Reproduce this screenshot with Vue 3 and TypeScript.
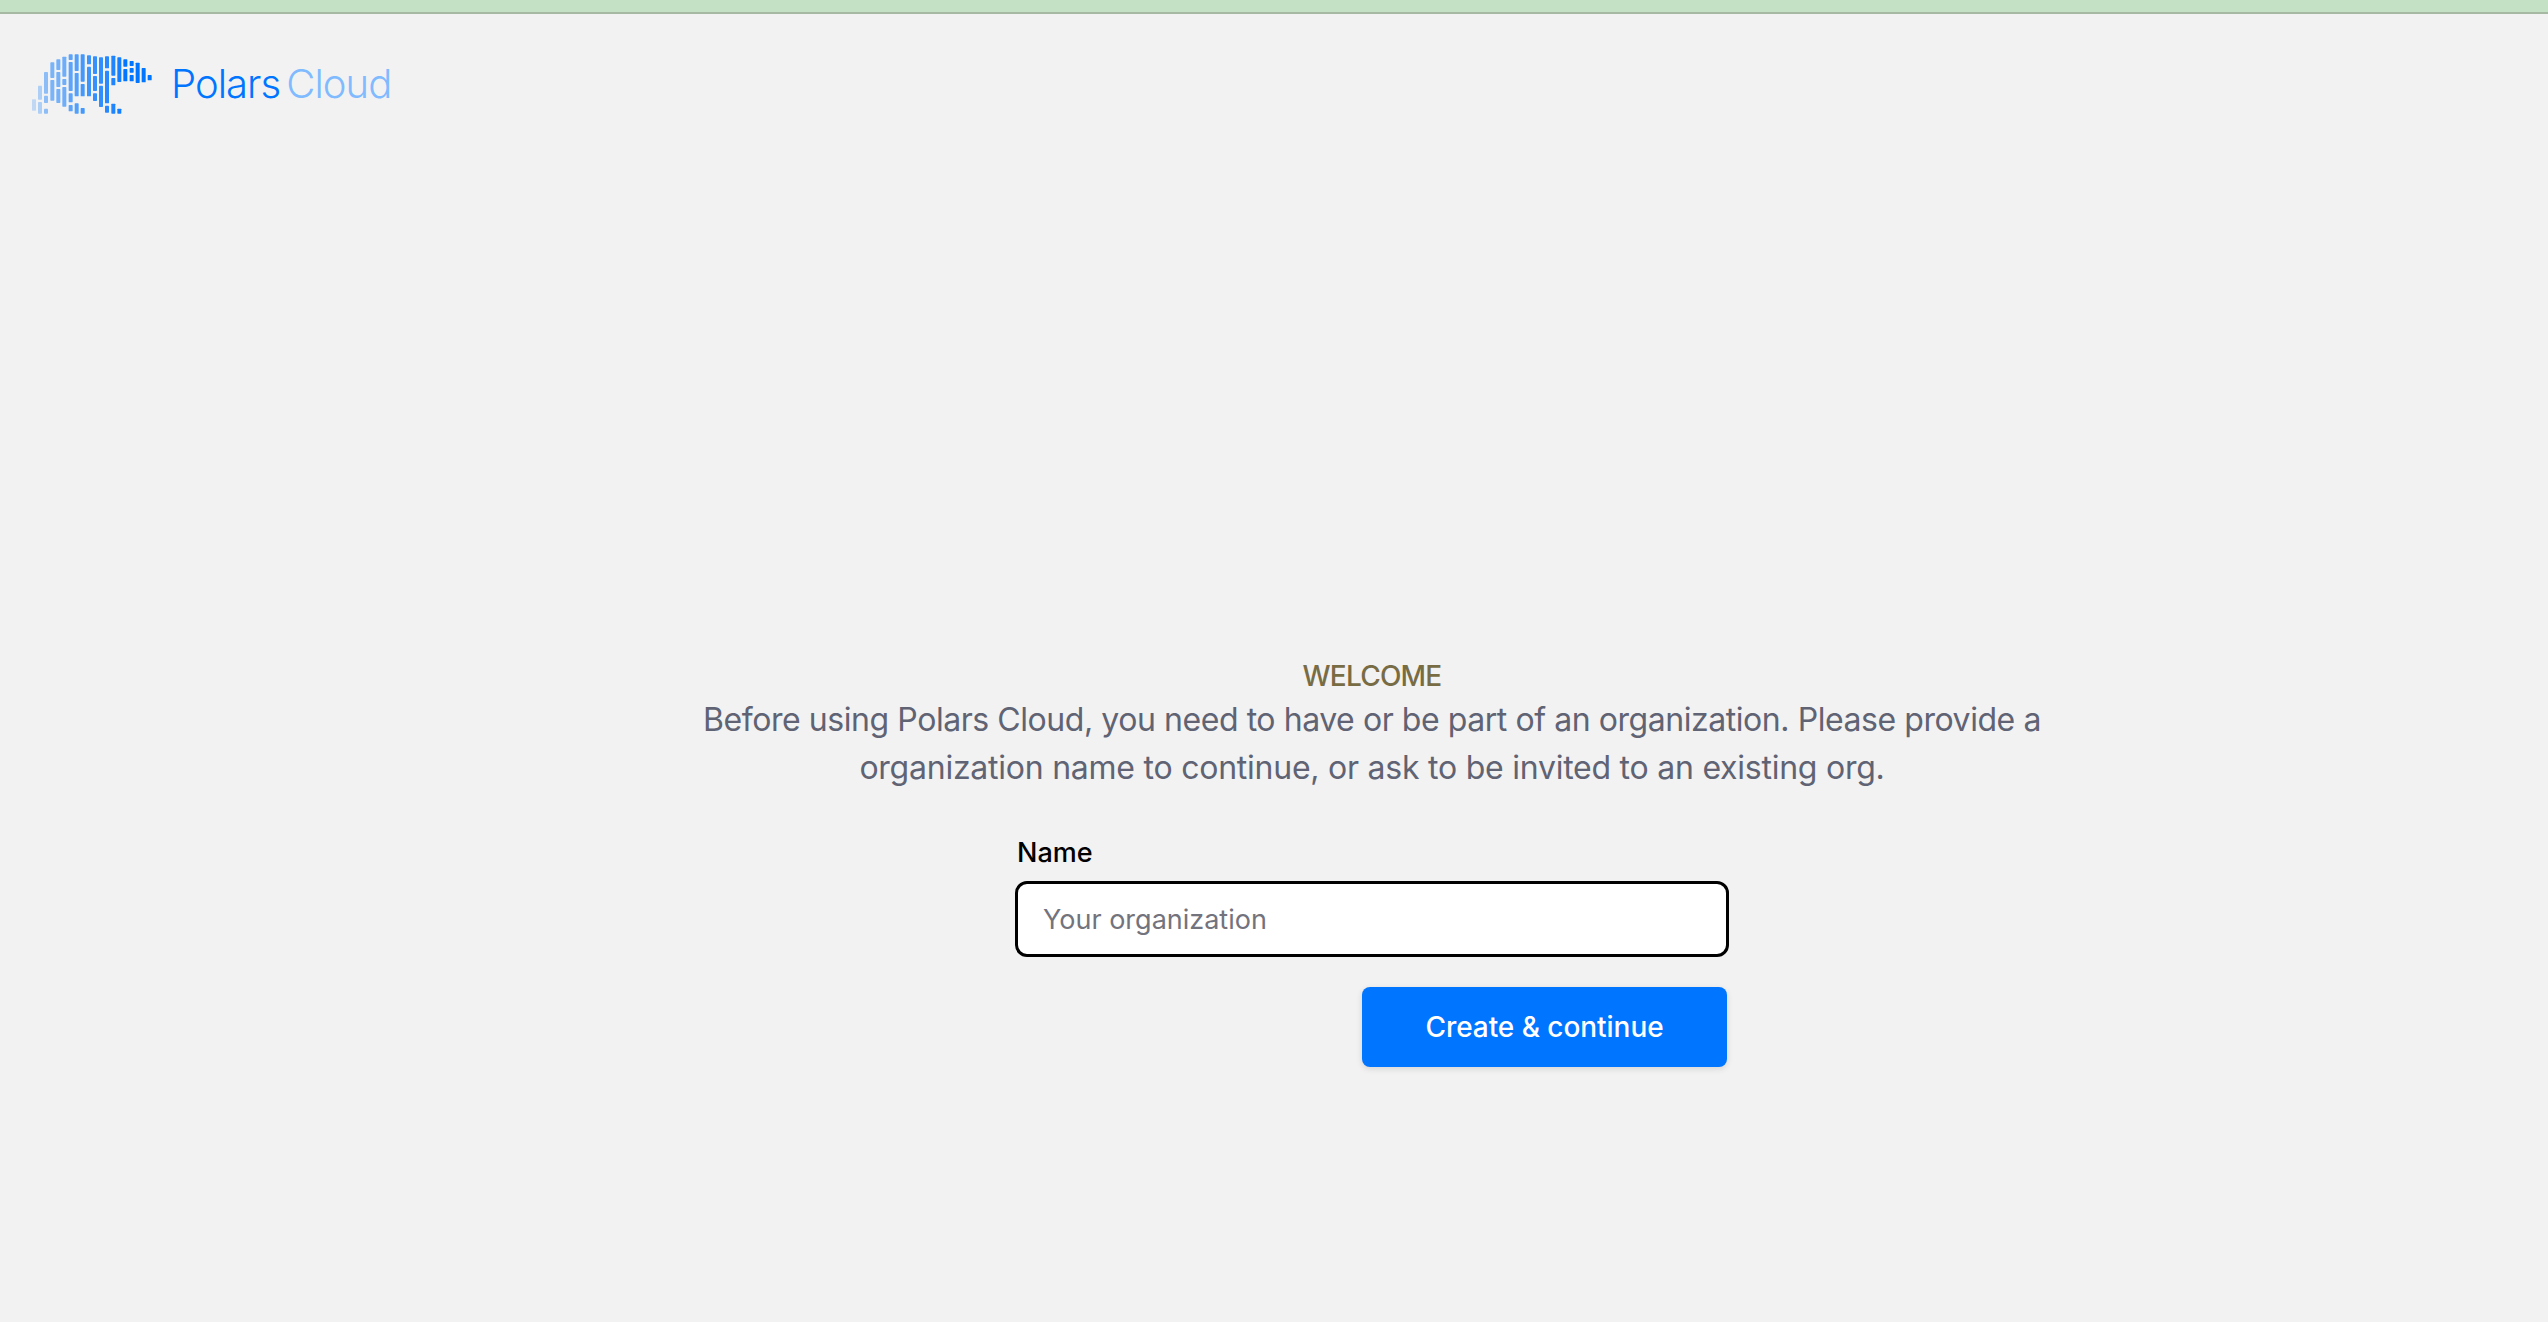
<script setup lang="ts">
const columns: [number, number, number[][]][] = [
  [42, 0.2, [[178, 212]]],
  [60, 0.28, [[137, 179], [186, 221]]],
  [78, 0.42, [[96, 161], [167, 189], [206, 221]]],
  [97, 0.5, [[67, 114], [120, 182]]],
  [115, 0.52, [[58, 90], [96, 141], [147, 189]]],
  [133, 0.55, [[50, 110], [117, 135], [141, 200]]],
  [152, 0.62, [[43, 60], [66, 153], [160, 187], [195, 214]]],
  [170, 0.66, [[43, 93], [99, 169], [190, 221]]],
  [188, 0.72, [[43, 125], [132, 169], [204, 221]]],
  [207, 0.75, [[46, 73], [80, 169]]],
  [225, 0.78, [[49, 102], [108, 153], [160, 183]]],
  [243, 0.8, [[52, 131], [137, 201]]],
  [261, 0.84, [[49, 85], [92, 190], [197, 218]]],
  [280, 0.88, [[47, 107], [114, 136], [191, 221]]],
  [298, 0.92, [[52, 126], [206, 221]]],
  [316, 1, [[58, 80], [87, 124]]],
  [335, 1, [[63, 78], [84, 98], [105, 124]]],
  [353, 1, [[68, 129]]],
  [371, 1, [[84, 127]]],
  [389, 1, [[105, 121]]],
]
const bars = columns.flatMap(([x, opacity, spans]) =>
  spans.map(([y1, y2]) => ({ x: x - 6, y: y1, h: y2 - y1, opacity })),
)
</script>

<template>
  <div class="page">
    <div class="topbar"></div>
    <header class="header">
      <svg class="mark" viewBox="36 43 360 178" aria-label="Polars logo">
        <rect
          v-for="(b, i) in bars"
          :key="i"
          :x="b.x"
          :y="b.y"
          width="12"
          :height="b.h"
          rx="2"
          fill="#0075ff"
          :opacity="b.opacity"
        />
      </svg>
      <div class="brand"><span class="polars">Polars</span><span class="cloud">Cloud</span></div>
    </header>
    <main class="main">
      <div class="eyebrow">WELCOME</div>
      <p class="intro">
        <span class="line">Before using Polars Cloud, you need to have or be part of an organization. Please provide a</span>
        <span class="line wide">organization name to continue, or ask to be invited to an existing org.</span>
      </p>
      <form class="form" @submit.prevent>
        <label class="label" for="org">Name</label>
        <input id="org" class="input" type="text" placeholder="Your organization" />
        <div class="actions">
          <button class="button" type="submit">Create &amp; continue</button>
        </div>
      </form>
    </main>
  </div>
</template>

<style>
html,
body {
  margin: 0;
  background: #f2f2f2;
}
</style>

<style scoped>
.page {
  min-height: 1322px;
  background: #f2f2f2;
  font-family: Inter, "Liberation Sans", sans-serif;
  display: flex;
  flex-direction: column;
  box-sizing: border-box;
}
.topbar {
  height: 12px;
  background: #c5e1c5;
  border-bottom: 2px solid #a5b9a3;
}
.header {
  display: flex;
  align-items: center;
  height: 100px;
  padding: 40px 0 0 32px;
  box-sizing: border-box;
}
.mark {
  width: 120px;
  height: 60px;
  flex: none;
}
.brand {
  margin-left: 19px;
  font-size: 40px;
  font-weight: 300;
  line-height: 48px;
  letter-spacing: -0.95px;
  display: flex;
  gap: 6px;
}
.polars {
  color: #0075ff;
}
.cloud {
  color: #80baff;
}
.main {
  display: flex;
  flex-direction: column;
  align-items: center;
  padding-top: 542px;
  padding-left: 196px;
}
.eyebrow {
  font-size: 28px;
  line-height: 40px;
  font-weight: 500;
  color: #786c45;
  letter-spacing: -0.8px;
}
.intro {
  margin: 0;
  font-size: 32px;
  line-height: 48px;
  color: #5f6373;
  text-align: center;
  letter-spacing: -0.44px;
  white-space: nowrap;
}
.line {
  display: block;
}
.wide {
  letter-spacing: -0.24px;
}
.form {
  width: 714px;
  margin-top: 41px;
  display: flex;
  flex-direction: column;
}
.label {
  margin-left: 2px;
  font-size: 27px;
  line-height: 40px;
  font-weight: 500;
  color: #000;
  margin-bottom: 8px;
}
.input {
  height: 76px;
  box-sizing: border-box;
  border: 3px solid #000;
  border-radius: 12px;
  background: #fff;
  padding: 0 25px;
  font: 400 27px Inter, "Liberation Sans", sans-serif;
  color: #111;
  outline: none;
}
.input::placeholder {
  color: #73737d;
  opacity: 1;
}
.actions {
  display: flex;
  justify-content: flex-end;
  margin-top: 30px;
  padding-right: 2px;
}
.button {
  width: 365px;
  height: 80px;
  border: none;
  border-radius: 8px;
  background: #0075ff;
  color: #fff;
  font: 500 28px Inter, "Liberation Sans", sans-serif;
  letter-spacing: -0.05px;
  box-shadow: 0 2px 6px rgba(0, 0, 0, 0.12);
}
</style>
